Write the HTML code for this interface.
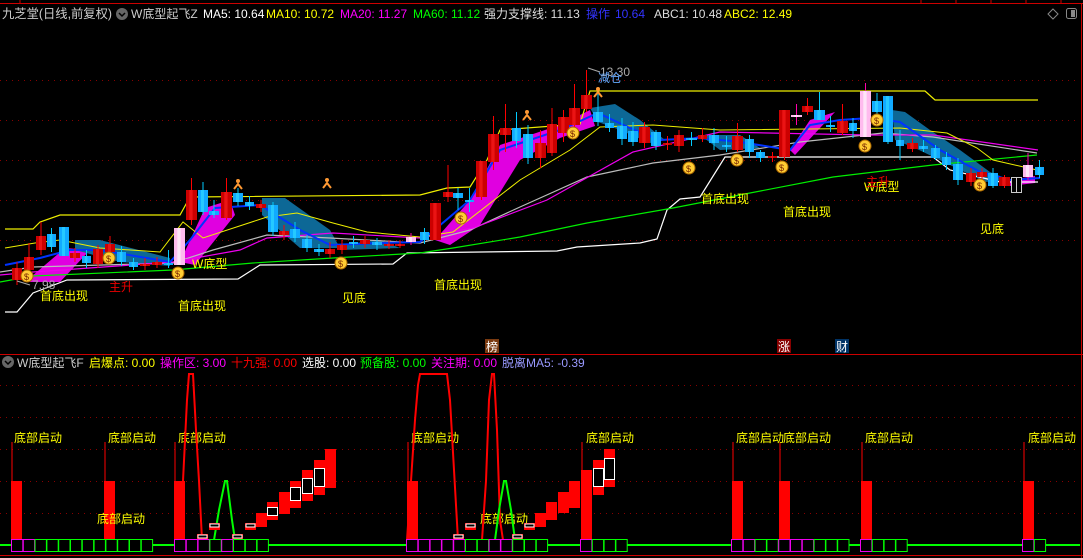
<!DOCTYPE html>
<html><head><meta charset="utf-8"><style>
html,body{margin:0;padding:0;background:#000;overflow:hidden}
svg{display:block}
text{font-family:"Liberation Sans","Noto Sans CJK SC",sans-serif}
</style></head><body>
<svg id="s" width="1083" height="558" xmlns="http://www.w3.org/2000/svg">
<rect width="1083" height="558" fill="#000"/>
<line x1="0" y1="3.5" x2="1083" y2="3.5" stroke="#c00" stroke-width="1"/>
<g stroke="#c00"><line x1="20" y1="0" x2="20" y2="3"/><line x1="921" y1="0" x2="921" y2="3"/><line x1="956" y1="0" x2="956" y2="3"/><line x1="991" y1="0" x2="991" y2="3"/><line x1="1026" y1="0" x2="1026" y2="3"/><line x1="1061" y1="0" x2="1061" y2="3"/></g>
<line x1="1081.5" y1="3" x2="1081.5" y2="558" stroke="#c00"/>
<line x1="0" y1="354.5" x2="1083" y2="354.5" stroke="#c00"/>
<line x1="0" y1="555.5" x2="1083" y2="555.5" stroke="#c00"/>
<g stroke="#800" stroke-dasharray="1,5">
<line x1="0" y1="80.5" x2="1080" y2="80.5"/><line x1="0" y1="120.5" x2="1080" y2="120.5"/><line x1="0" y1="160.5" x2="1080" y2="160.5"/><line x1="0" y1="200.5" x2="1080" y2="200.5"/><line x1="0" y1="240.5" x2="1080" y2="240.5"/>
<line x1="0" y1="385.5" x2="1080" y2="385.5"/><line x1="0" y1="417.5" x2="1080" y2="417.5"/><line x1="0" y1="449.5" x2="1080" y2="449.5"/><line x1="0" y1="481.5" x2="1080" y2="481.5"/><line x1="0" y1="513.5" x2="1080" y2="513.5"/>
</g>
<text x="2" y="18" font-size="12.5" fill="#ccc" textLength="110" lengthAdjust="spacingAndGlyphs">九芝堂(日线,前复权)</text>
<circle cx="122" cy="14" r="6" fill="#666"/><path d="M119 13l3 3 3-3" stroke="#000" stroke-width="1.5" fill="none"/>
<text y="18" font-size="12"><tspan x="131" fill="#ccc">W底型起飞Z</tspan><tspan x="203" fill="#fff">MA5: 10.64</tspan><tspan x="266" fill="#ff0">MA10: 10.72</tspan><tspan x="340" fill="#f0f">MA20: 11.27</tspan><tspan x="413" fill="#0f0">MA60: 11.12</tspan><tspan x="484" fill="#ddd">强力支撑线: 11.13</tspan><tspan x="586" fill="#33f">操作</tspan><tspan x="615" fill="#33f">10.64</tspan><tspan x="654" fill="#ddd">ABC1: 10.48</tspan><tspan x="724" fill="#ff0">ABC2: 12.49</tspan></text>
<path d="M1053 9l5 5-5 5-5-5z" stroke="#888" fill="none"/>
<rect x="1066.5" y="8.5" width="10" height="10" rx="2" stroke="#888" fill="none"/><rect x="1071" y="10" width="4" height="7" fill="#888"/>
<g id="main"></g>
<g id="sub"></g>
<circle cx="8" cy="362" r="6" fill="#666"/><path d="M5 361l3 3 3-3" stroke="#000" stroke-width="1.5" fill="none"/>
<text y="367" font-size="12"><tspan x="17" fill="#ccc">W底型起飞F</tspan><tspan x="89" fill="#ff0">启爆点: 0.00</tspan><tspan x="160" fill="#f0f">操作区: 3.00</tspan><tspan x="231" fill="#f00">十九强: 0.00</tspan><tspan x="302" fill="#fff">选股: 0.00</tspan><tspan x="360" fill="#0f0">预备股: 0.00</tspan><tspan x="431" fill="#f0f">关注期: 0.00</tspan><tspan x="502" fill="#99f">脱离MA5: -0.39</tspan></text>
<rect x="485" y="339" width="14" height="14" fill="#7a3a10"/><text x="486" y="351" font-size="12" fill="#fff">榜</text>
<rect x="777" y="339" width="14" height="14" fill="#800"/><text x="778" y="351" font-size="12" fill="#fff">涨</text>
<rect x="835" y="339" width="14" height="14" fill="#036"/><text x="836" y="351" font-size="12" fill="#fff">财</text>
</svg>
<script>
const NS="http://www.w3.org/2000/svg";
function el(p,t,a,txt){const e=document.createElementNS(NS,t);for(const k in a)e.setAttribute(k,a[k]);if(txt!==undefined)e.textContent=txt;p.appendChild(e);return e;}
const M=document.getElementById('main'),S=document.getElementById('sub');
function pl(p,pts,c,w){el(p,'polyline',{points:pts.map(a=>a.join(',')).join(' '),fill:'none',stroke:c,'stroke-width':w||1});}
function poly(p,pts,c){el(p,'polygon',{points:pts.map(a=>a.join(',')).join(' '),fill:c});}
const T='#0d6896';
poly(M,[[25,282],[65,248],[90,250],[60,282]],'#e000e0');
poly(M,[[75,240],[100,240],[170,258],[170,266],[120,262],[75,250]],T);
poly(M,[[180,262],[205,208],[230,200],[235,215],[195,265]],'#e000e0');
poly(M,[[262,198],[285,198],[330,230],[340,248],[300,248],[262,215]],T);
poly(M,[[340,245],[380,240],[400,248],[340,250]],T);
poly(M,[[435,240],[470,200],[500,145],[560,125],[590,110],[595,126],[560,138],[520,160],[480,225],[450,245]],'#e000e0');
poly(M,[[590,108],[615,104],[640,120],[665,140],[650,143],[620,130],[598,122]],T);
poly(M,[[700,135],[740,135],[760,148],[720,150]],T);
poly(M,[[790,150],[810,120],[835,112],[820,128],[795,155]],'#e000e0');
poly(M,[[892,110],[905,112],[930,130],[960,150],[990,172],[1010,180],[985,182],[950,165],[915,148],[895,140]],T);
poly(M,[[1010,180],[1035,176],[1035,183],[1010,186]],'#e000e0');
pl(M,[[5,312],[17,312],[33,293],[67,280],[238,279],[260,265],[393,264],[407,253],[557,251],[577,247],[640,243],[657,239],[667,210],[680,199],[700,197],[725,157],[933,157],[950,170],[1000,182],[1038,182]],'#fff',1.2);
pl(M,[[0,282],[33,276],[173,270],[253,263],[333,258],[420,253],[453,248],[520,237],[587,223],[673,208],[750,193],[833,177],[933,165],[1037,155]],'#0e0',1.2);
pl(M,[[0,272],[33,267],[173,263],[213,250],[267,235],[330,238],[420,243],[470,230],[520,207],[587,177],[653,163],[720,155],[800,142],[883,133],[933,137],[1037,153]],'#bbb',1.2);
pl(M,[[0,275],[33,272],[173,262],[240,250],[267,238],[333,233],[420,238],[473,228],[547,200],[633,152],[720,132],[867,135],[933,135],[1038,150]],'#e0e',1.2);
pl(M,[[5,248],[35,243],[60,240],[100,248],[160,252],[183,222],[203,238],[267,217],[297,213],[333,223],[367,232],[420,237],[453,232],[520,180],[570,150],[600,127],[653,125],[720,130],[900,128],[947,133],[977,148],[993,160],[1037,170]],'#ee0',1);
pl(M,[[5,229],[33,229],[40,222],[60,215],[180,215],[190,197],[420,195],[447,188],[470,187],[487,160],[500,130],[580,124],[590,91],[925,91],[935,100],[1038,100]],'#ee0',1.2);
pl(M,[[5,265],[40,258],[70,250],[100,250],[170,262],[190,240],[215,208],[260,205],[300,230],[330,245],[380,243],[420,242],[470,200],[500,150],[560,130],[598,113],[630,128],[660,140],[700,138],[740,142],[790,150],[810,125],[840,120],[870,118],[900,122],[940,150],[980,172],[1010,180],[1040,178]],'#03f',2);
const R='#e00',B='#09e',P='#f7c',C=[
[12,10,268,280,262,285,R],[24,10,257,270,243,275,R],[36,10,236,250,222,255,R],[47,9,234,247,228,252,B],[59,10,227,256,227,256,B],
[70,10,253,258,248,262,R],[82,9,256,263,250,268,B],[93,10,249,264,245,268,R],[105,10,244,252,236,256,R],[117,9,252,262,246,266,B],
[129,9,262,267,258,270,B],[140,10,264,266,258,270,R],[152,10,262,265,257,268,R],[164,9,263,265,250,268,B],[174,11,228,265,228,265,P],
[186,11,190,220,178,225,R],[198,10,190,212,182,215,B],[209,10,211,215,200,218,B],[221,11,192,218,178,220,R],[233,10,193,202,188,206,B],
[245,9,202,206,196,210,B],[256,10,204,208,200,212,R],[268,10,205,232,202,236,B],[279,10,231,235,225,240,R],[290,10,229,238,222,242,B],
[302,10,239,248,235,252,B],[314,10,249,252,244,256,B],[325,10,249,254,242,258,R],[337,10,245,250,240,254,R],[349,9,242,244,236,248,B],
[360,10,240,244,236,248,R],[372,10,242,245,238,250,B],[384,10,244,245,240,249,R],[395,10,244,245,240,248,R],[406,10,237,242,233,245,P],
[420,9,232,240,228,244,B],[430,11,203,240,203,240,R],[443,10,192,197,165,202,R],[453,10,193,198,188,210,B],[465,9,200,202,188,212,B],
[476,11,161,197,161,200,R],[488,11,134,162,116,170,R],[500,11,128,135,104,152,R],[512,9,128,141,112,148,B],[523,10,134,158,125,164,B],
[535,11,143,158,130,168,R],[547,10,124,153,108,156,R],[558,11,117,133,110,142,R],[569,11,108,125,84,130,R],[581,11,95,109,70,112,R],
[593,10,112,122,94,126,B],[605,9,123,128,114,132,B],[617,10,126,139,118,145,B],[628,10,131,142,122,146,B],[639,11,127,143,122,148,R],
[651,10,132,146,130,150,B],[663,9,143,145,136,150,R],[674,10,135,146,130,152,R],[686,11,138,140,132,146,B],[698,9,135,139,128,142,R],
[709,10,135,143,128,150,B],[722,9,145,147,136,152,B],[732,11,136,150,123,152,R],[745,9,139,152,135,158,B],[756,9,152,158,150,162,B],
[768,9,156,158,152,162,R],[779,11,110,157,110,160,R],[791,11,115,116,104,125,P],[802,11,106,112,98,115,R],[814,11,110,120,92,120,B],
[826,9,125,127,116,132,B],[837,11,121,133,104,135,R],[849,8,123,131,118,138,B],[860,11,91,137,83,137,P],[872,10,101,112,93,115,B],
[883,10,96,142,96,144,B],[896,8,140,146,130,160,B],[907,11,143,149,138,152,R],[919,9,146,149,140,152,B],[931,9,148,158,145,160,B],
[942,9,157,165,152,170,B],[953,10,164,180,158,185,B],[966,10,173,182,168,186,R],[977,10,172,177,168,180,R],[988,10,173,186,168,188,B],
[999,11,177,186,175,188,R],[1011,11,177,192,177,192,'H'],[1023,10,165,177,153,180,P],[1035,9,167,175,160,178,B]];
C.forEach(c=>{const[x,w,t,b,h,l,col]=c;const cx=x+w/2;
 const wc=col==R?'#f00':col==B?'#0cf':col==P?'#f0a':'#ccc';
 el(M,'line',{x1:cx,y1:h,x2:cx,y2:l,stroke:wc});
 if(col=='H'){el(M,'rect',{x:x+.5,y:t+.5,width:w-1,height:b-t,fill:'#000',stroke:'#ccc'});el(M,'line',{x1:cx,y1:t,x2:cx,y2:b,stroke:'#ccc'});}
 else{const g=col==R?'#c00':col==B?'#1af':'#fbe';el(M,'rect',{x:x,y:t,width:w,height:Math.max(2,b-t),fill:g});
 el(M,'rect',{x:x+w*0.3,y:t,width:w*0.3,height:Math.max(2,b-t),fill:col==R?'#f22':col==B?'#3df':'#fff',opacity:0.6});}
});
[[27,276],[109,258],[178,273],[341,263],[461,218],[573,133],[689,168],[737,160],[782,167],[877,120],[865,146],[980,185]].forEach(([x,y])=>{
 el(M,'circle',{cx:x,cy:y,r:6,fill:'#fc3',stroke:'#a60'});el(M,'text',{x:x-3,y:y+4,'font-size':9,fill:'#720'},'$');});
[[238,187],[327,186],[527,118],[598,95]].forEach(([x,y])=>{el(M,'circle',{cx:x,cy:y-6,r:2,fill:'#f93'});pl(M,[[x-4,y+2],[x,y-3],[x+4,y+2]],'#f93',2);});
const Y='#ff0';
[[40,300,'首底出现'],[178,310,'首底出现'],[434,289,'首底出现'],[701,203,'首底出现'],[783,216,'首底出现'],[342,302,'见底'],[980,233,'见底'],[192,268,'W底型'],[864,191,'W底型']].forEach(([x,y,t])=>el(M,'text',{x,y,'font-size':12,fill:Y},t));
el(M,'text',{x:109,y:291,'font-size':12,fill:'#e00'},'主升');el(M,'text',{x:866,y:186,'font-size':12,fill:'#e00'},'主升');
el(M,'text',{x:32,y:289,'font-size':12,fill:'#aaa'},'7.98');pl(M,[[30,285],[17,281]],'#aaa');
el(M,'text',{x:600,y:76,'font-size':12,fill:'#aaa'},'13.30');pl(M,[[588,68],[600,72]],'#aaa');
el(M,'text',{x:598,y:82,'font-size':12,fill:'#6af'},'减仓');
pl(S,[[0,545],[1080,545]],'#0f0',2);
[[11,442,481],[104,442,481],[174,442,481],[407,442,481],[581,442,470],[732,442,481],[779,442,481],[861,442,481],[1023,442,481]].forEach(([x,t,b])=>{
 el(S,'line',{x1:x+1,y1:t,x2:x+1,y2:b,stroke:'#f00'});el(S,'rect',{x:x,y:b,width:11,height:539-b,fill:'#f00'});});
[[14,442],[108,442],[178,442],[411,442],[586,442],[736,442],[783,442],[865,442],[1028,442],[97,523],[480,523]].forEach(([x,y])=>el(S,'text',{x,y,'font-size':12,fill:Y},'底部启动'));
pl(S,[[178,540],[183,481],[187,400],[189,374],[193,374],[196,430],[199,481],[202,540]],'#f00',2);
pl(S,[[407,540],[411,481],[415,420],[418,385],[420,374],[447,374],[450,400],[454,470],[458,540]],'#f00',2);
pl(S,[[482,540],[486,481],[489,400],[492,374],[494,374],[497,430],[500,520],[503,540]],'#f00',2);
pl(S,[[214,540],[219,510],[225,481],[227,481],[232,520],[235,540]],'#0f0',2);
pl(S,[[495,540],[499,510],[504,481],[506,481],[511,510],[515,540]],'#0f0',2);
const st=[[256,513,527],[267,502,520,507,515],[279,492,514],[290,481,508,487,500],[302,470,501,478,493],[314,460,495,468,486],[325,449,488],
[535,513,527],[546,502,520],[558,492,513],[569,481,508],[593,460,495,468,486],[604,449,487,458,479]];
st.forEach(([x,t,b,wt,wb])=>{el(S,'rect',{x,y:t,width:11,height:b-t,fill:'#f00'});if(wt)el(S,'rect',{x:x+.5,y:wt+.5,width:10,height:wb-wt,fill:'#000',stroke:'#fff'});});
[[197,535,538],[209,524,528],[232,535,538],[245,524,528],[453,535,538],[465,524,528],[512,535,538],[524,524,528]].forEach(([x,t,b])=>{el(S,'rect',{x,y:t-1,width:11,height:7,fill:'#f00'});el(S,'rect',{x:x+1,y:t,width:9,height:3,fill:'#000',stroke:'#fff'});});
function boxes(x0,cols){cols.forEach((c,i)=>el(S,'rect',{x:x0+i*11.8+.5,y:539.5,width:11.3,height:12,fill:'#000',stroke:c==1?'#e0e':'#0f0'}));}
boxes(11,[1,1,0,0,0,0,0,0,0,0,0,0]);
boxes(174,[1,1,1,0,1,0,0,0]);
boxes(406,[1,1,1,1,1,0,0,1,1,0,0,0]);
boxes(580,[1,0,0,0]);
boxes(731,[1,1,0,0,1,1,1,0,0,0]);
boxes(860,[1,0,0,0]);
boxes(1022,[1,0]);
</script>
</body></html>
